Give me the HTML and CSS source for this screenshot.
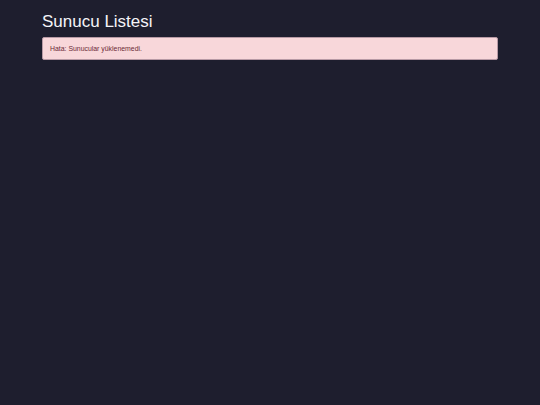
FILE: index.html
```html
<!DOCTYPE html>
<html lang="tr">
<head>
<meta charset="utf-8">
<link rel="stylesheet" href="styles.css">
</head>
<body>
<div class="container">
  <h1 class="title">Sunucu Listesi</h1>
  <div class="alert">Hata: Sunucular yüklenemedi.</div>
</div>
</body>
</html>
```
FILE: styles.css
```css
html, body {
  margin: 0;
  padding: 0;
  background: #1e1e2e;
  height: 100%;
}
body {
  font-family: "Liberation Sans", Arial, sans-serif;
  color: #ffffff;
}
.container {
  width: 456px;
  margin: 0 auto;
  padding-top: 12px;
}
.title {
  margin: 0 0 5px 0;
  font-size: 17px;
  font-weight: normal;
  line-height: 20px;
  color: #f4f4f8;
}
.alert {
  background: #f8d7da;
  color: #6b2a36;
  border: 1px solid #b89aa5;
  border-radius: 2px;
  padding: 6px 7px;
  font-size: 6.9px;
  line-height: 9px;
}
```
